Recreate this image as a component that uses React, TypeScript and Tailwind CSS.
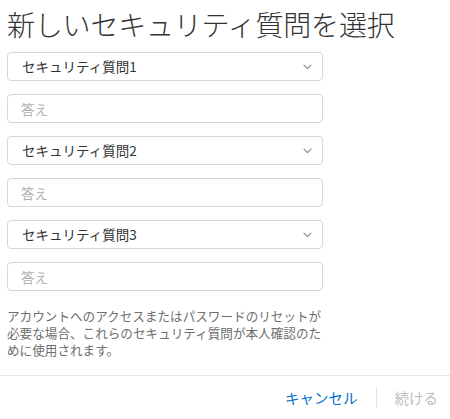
import React from 'react';

const font = { fontFamily: '"Noto Sans CJK JP", "Noto Sans", sans-serif' };

const QuestionSelect: React.FC<{ label: string }> = ({ label }) => (
  <div className="flex h-[29px] items-center justify-between rounded-[4px] border border-[#d6d6d6] bg-white pl-[14px] pr-[10px]">
    <span className="text-[13.5px] text-[#333]">{label}</span>
    <svg width="9" height="6" viewBox="0 0 9 6" fill="none">
      <path d="M1 1.2l3.5 3.5L8 1.2" stroke="#8a8a8a" strokeWidth="1.2" strokeLinecap="round" strokeLinejoin="round" />
    </svg>
  </div>
);

const AnswerInput: React.FC = () => (
  <input
    type="text"
    placeholder="答え"
    className="h-[29px] w-full rounded-[4px] border border-[#d6d6d6] bg-white px-[13px] text-[13.5px] text-[#333] outline-none placeholder:text-[#b0b0b0]"
  />
);

const App: React.FC = () => {
  const questions = ['セキュリティ質問1', 'セキュリティ質問2', 'セキュリティ質問3'];

  return (
    <div className="h-[419px] w-[450px] overflow-hidden bg-white" style={font}>
      <div className="px-[7px]">
        <h1 className="pt-[7px] text-[28px] leading-[34px] font-light tracking-[-0.2px] text-[#333]">
          新しいセキュリティ質問を選択
        </h1>
        <div className="mt-[11px] flex w-[316px] flex-col gap-[13px]">
          {questions.map((q) => (
            <React.Fragment key={q}>
              <QuestionSelect label={q} />
              <AnswerInput />
            </React.Fragment>
          ))}
        </div>
        <p className="mt-[16px] text-[12.6px] leading-[17px] text-[#6e6e6e]">
          アカウントへのアクセスまたはパスワードのリセットが
          <br />
          必要な場合、これらのセキュリティ質問が本人確認のた
          <br />
          めに使用されます。
        </p>
      </div>
      <div className="mt-[17px] flex h-[44px] items-center justify-end border-t border-[#e6e6e6] pr-[12px]">
        <button className="text-[14.5px] text-[#0070c9]">キャンセル</button>
        <div className="mx-[18px] h-[21px] w-px bg-[#e3e3e3]" />
        <button className="text-[14.5px] text-[#bdbdbd]">続ける</button>
      </div>
    </div>
  );
};

export default App;
